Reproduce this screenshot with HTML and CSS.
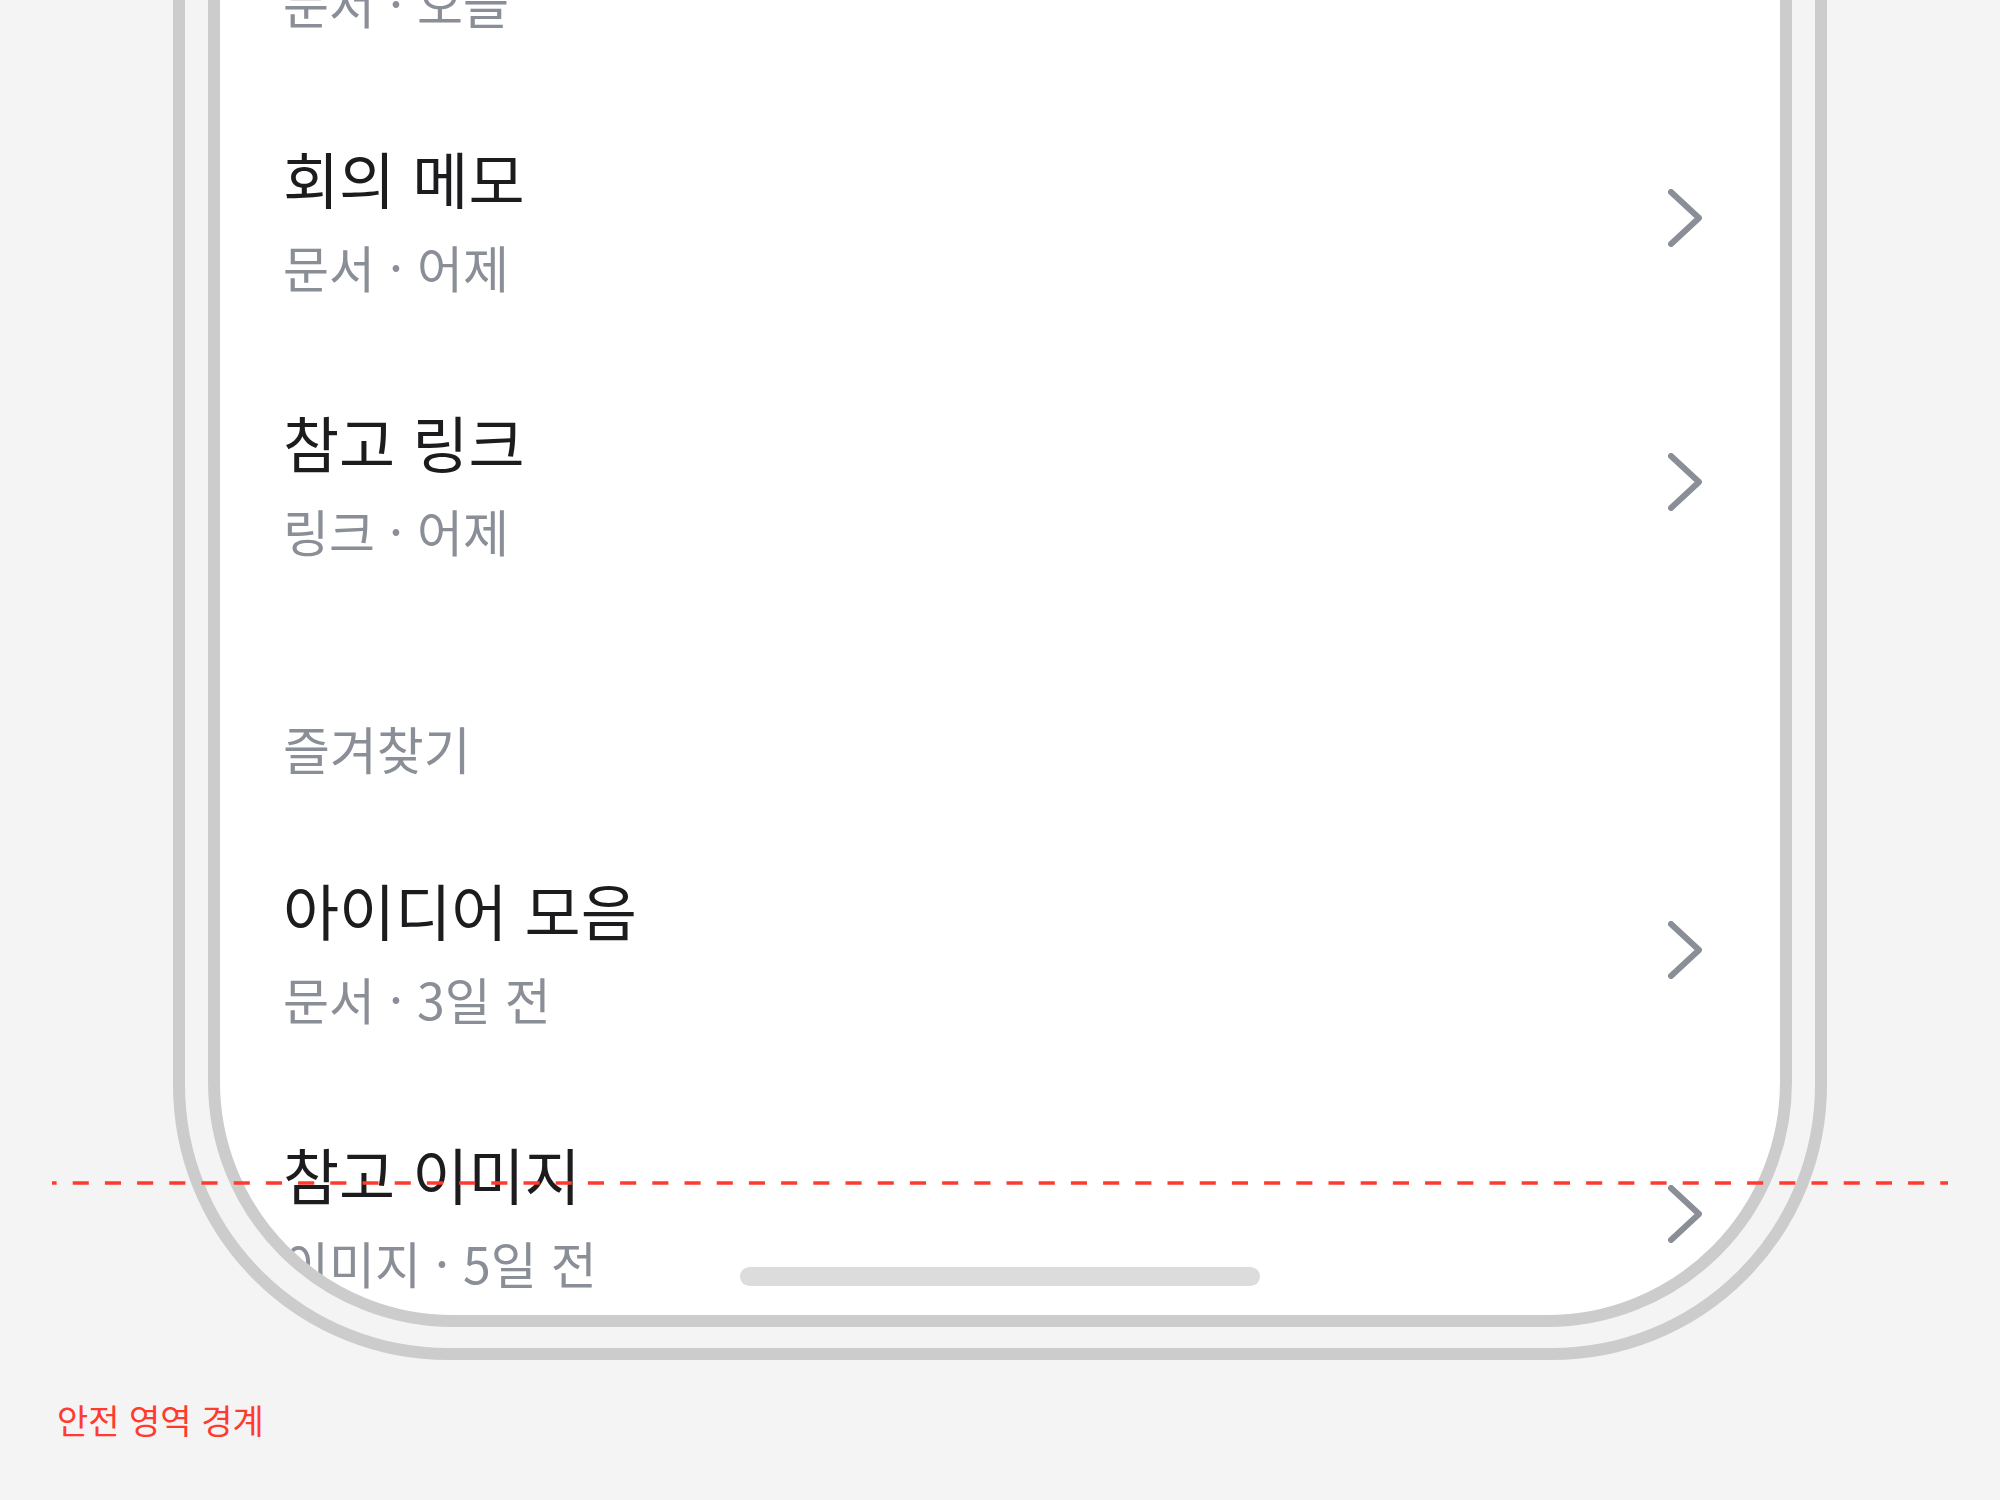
FILE: index.html
```html
<!DOCTYPE html>
<html lang="ko">
<head>
  <meta charset="utf-8">
  <link rel="stylesheet" href="styles.css">
</head>
<body>
  <div class="phone">
    <div class="screen">
      <div class="list">
        <div class="row">
          <div class="info">
            <div class="title">주간 보고서</div>
            <div class="meta">문서 · 오늘</div>
          </div>
          <svg class="chevron" viewBox="0 0 34 58"><path d="M3 3 L31 29 L3 55"/></svg>
        </div>
        <div class="row">
          <div class="info">
            <div class="title">회의 메모</div>
            <div class="meta">문서 · 어제</div>
          </div>
          <svg class="chevron" viewBox="0 0 34 58"><path d="M3 3 L31 29 L3 55"/></svg>
        </div>
        <div class="row">
          <div class="info">
            <div class="title">참고 링크</div>
            <div class="meta">링크 · 어제</div>
          </div>
          <svg class="chevron" viewBox="0 0 34 58"><path d="M3 3 L31 29 L3 55"/></svg>
        </div>

        <div class="section-title">즐겨찾기</div>

        <div class="row">
          <div class="info">
            <div class="title">아이디어 모음</div>
            <div class="meta">문서 · 3일 전</div>
          </div>
          <svg class="chevron" viewBox="0 0 34 58"><path d="M3 3 L31 29 L3 55"/></svg>
        </div>
        <div class="row">
          <div class="info">
            <div class="title">참고 이미지</div>
            <div class="meta">이미지 · 5일 전</div>
          </div>
          <svg class="chevron" viewBox="0 0 34 58"><path d="M3 3 L31 29 L3 55"/></svg>
        </div>
      </div>
      <div class="home-indicator"></div>
    </div>
  </div>

  <!-- safe area marker -->
  <svg class="safe-line" viewBox="0 0 1896 4"><line x1="0" y1="2" x2="1896" y2="2"/></svg>
  <div class="safe-label">안전 영역 경계</div>
</body>
</html>
```

FILE: styles.css
```css
* {
  margin: 0;
  padding: 0;
  box-sizing: border-box;
}

body {
  background: #f4f4f4;
  font-family: "Noto Sans CJK KR", sans-serif;
  overflow: hidden;
  height: 1500px;
}

.phone {
  width: 1654px;
  margin: -300px auto 0;
  border: 12px solid #cccccc;
  border-radius: 275px;
  padding: 22px 23px 21px;
}

.screen {
  position: relative;
  height: 1593px;
  background: #fff;
  border: 12px solid #cccccc;
  border-radius: 245px;
  overflow: hidden;
}

.list {
  padding-top: 76px;
}

.row {
  height: 264px;
  display: flex;
  align-items: center;
  justify-content: space-between;
  padding: 0 78px 0 63px;
}

.title {
  font-size: 61px;
  line-height: 76px;
  color: #1c1c1e;
}

.meta {
  margin-top: 19px;
  font-size: 50px;
  line-height: 62px;
  color: #8a8e96;
}

.chevron {
  width: 34px;
  height: 58px;
  flex-shrink: 0;
}

.chevron path {
  fill: none;
  stroke: #8a8e96;
  stroke-width: 6;
  stroke-linecap: round;
  stroke-linejoin: round;
}

.section-title {
  padding: 104px 63px 40px;
  font-size: 51px;
  line-height: 60px;
  color: #8a8e96;
}

.home-indicator {
  position: absolute;
  left: 0;
  right: 0;
  bottom: 29px;
  width: 520px;
  height: 19px;
  margin: 0 auto;
  border-radius: 10px;
  background: #dcdcdc;
}

.safe-line {
  position: absolute;
  left: 52px;
  top: 1181px;
  width: 1896px;
  height: 4px;
}

.safe-line line {
  stroke: #ff3b30;
  stroke-width: 3.6;
  stroke-dasharray: 16.1 16.1;
  stroke-dashoffset: 11.5;
}

.safe-label {
  margin: 40px 0 0 57px;
  font-size: 34px;
  line-height: 40px;
  color: #ff3b30;
}
```
